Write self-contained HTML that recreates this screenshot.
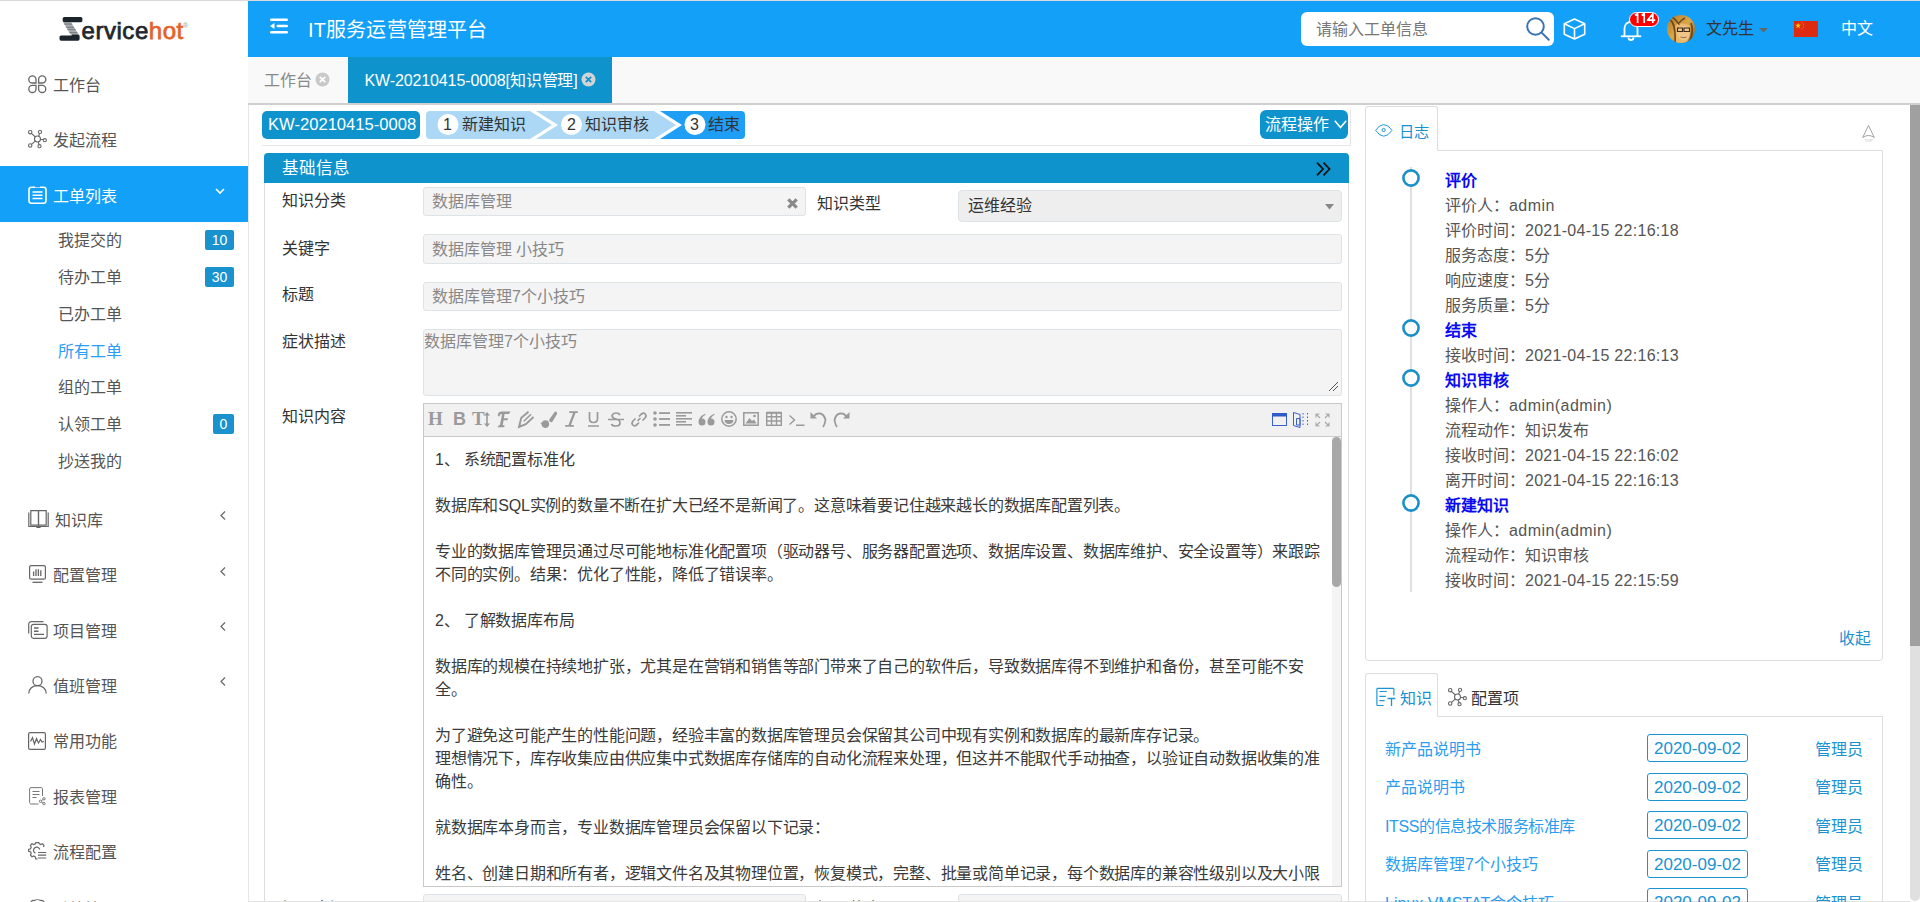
<!DOCTYPE html>
<html lang="zh-CN"><head><meta charset="utf-8">
<style>
*{margin:0;padding:0;box-sizing:border-box}
html,body{width:1920px;height:902px;overflow:hidden;background:#fff;font-family:"Liberation Sans",sans-serif;color:#555}
.a{position:absolute}
.t{position:absolute;white-space:nowrap;font-size:16px;line-height:20px}
svg{position:absolute;overflow:visible}
#topline{left:0;top:0;width:1920px;height:1px;background:#d9dadc}
#side{left:0;top:1px;width:249px;height:901px;background:#fff;border-right:1px solid #e6e6e6}
.mt{position:absolute;left:53px;font-size:16px;line-height:20px;color:#555;white-space:nowrap}
.sub{position:absolute;left:58px;font-size:16px;line-height:20px;color:#555;white-space:nowrap}
.badge{position:absolute;left:205px;width:29px;height:20px;background:#1a92cd;border-radius:2px;color:#fff;font-size:14px;line-height:20px;text-align:center}
#hdr{left:248px;top:1px;width:1672px;height:56px;background:#12a0f8}
#tabs{left:248px;top:57px;width:1672px;height:48px;background:#f9f9f9;border-bottom:2px solid #cfcfcf}
</style></head><body>
<div id="topline" class="a"></div>

<!-- SIDEBAR -->
<div id="side" class="a">
  <!-- logo -->
  <svg style="left:59px;top:15px" width="30" height="26" viewBox="0 0 30 26">
    <path d="M4.2 6.2H12L19.8 18.8H11.8z" fill="#a9adb2"/>
    <path d="M5.2 8.1H13.2 M6.9 11.3H15.1 M8.4 13.6H16.6 M10.3 16.6H18.4" stroke="#6f757b" stroke-width="0.9"/>
    <path d="M5.3 0.9H21.8Q23.4 0.9 23.4 2.5V4.6Q23.4 6.2 21.8 6.2H5.3Q3.7 6.2 3.7 4.6V2.5Q3.7 0.9 5.3 0.9z" fill="#1b232b"/>
    <path d="M2.1 19.5H12.5L13 18.6H19Q20.6 18.6 20.6 20.2V23.1Q20.6 24.7 19 24.7H2.1Q0.5 24.7 0.5 23.1V21.1Q0.5 19.5 2.1 19.5z" fill="#1b232b"/>
  </svg>
  <div class="t" style="left:81.5px;top:15px;font-size:24px;line-height:30px;color:#1e262e;letter-spacing:0.55px;-webkit-text-stroke:0.75px #1e262e">ervice<span style="color:#e4632a;-webkit-text-stroke:0.75px #e4632a">hot</span></div>
  <div class="t" style="left:183px;top:21px;font-size:7px;line-height:8px;color:#999">®</div>
</div>
<div id="menu" class="a" style="left:0;top:0;width:248px;height:902px">
  <!-- 工作台 -->
  <svg style="left:28px;top:75px" width="19" height="18" viewBox="0 0 19 18" fill="none" stroke="#666" stroke-width="1.3">
    <path d="M8 8H4.4A3.6 3.6 0 1 1 8 4.4z"/>
    <path d="M10.6 8V4.4A3.6 3.6 0 1 1 14.2 8z"/>
    <path d="M8 10.3V13.9A3.6 3.6 0 1 1 4.4 10.3z"/>
    <path d="M10.6 10.3H14.2A3.6 3.6 0 1 1 10.6 13.9z"/>
  </svg>
  <div class="mt" style="top:76px">工作台</div>
  <!-- 发起流程 -->
  <svg style="left:28px;top:130px" width="19" height="18" viewBox="0 0 19 18" fill="none" stroke="#666" stroke-width="1.1">
    <circle cx="9.5" cy="9" r="3"/>
    <circle cx="2.2" cy="2.2" r="1.7"/><circle cx="12" cy="1.9" r="1.6"/><circle cx="16.8" cy="10.2" r="1.6"/><circle cx="2.2" cy="15.5" r="1.7"/><circle cx="11.5" cy="16.2" r="1.6"/>
    <path d="M3.4 3.4L7.4 7 M11.6 3.4L10.6 6.2 M12.5 9.5h2.7 M3.5 14.3l4-3.4 M10.2 12l0.9 2.6"/>
  </svg>
  <div class="mt" style="top:131px">发起流程</div>
  <!-- 工单列表 active -->
  <div class="a" style="left:0;top:166px;width:248px;height:56px;background:#12a0f8"></div>
  <svg style="left:28px;top:186px" width="19" height="18" viewBox="0 0 19 18" fill="none" stroke="#fff" stroke-width="1.6">
    <rect x="1" y="1.2" width="17" height="16" rx="2.5"/>
    <path d="M4.5 6h10 M4.5 9.2h10 M4.5 12.4h10" stroke-width="1.5"/>
    <path d="M7 0.6h5" stroke="#12a0f8" stroke-width="1.6"/>
  </svg>
  <div class="mt" style="top:187px;color:#fff">工单列表</div>
  <svg style="left:215px;top:188px" width="10" height="7" viewBox="0 0 10 7" fill="none" stroke="#fff" stroke-width="1.6"><path d="M1 1l4 4 4-4"/></svg>
  <!-- submenu -->
  <div class="sub" style="top:231px">我提交的</div><div class="badge" style="top:230px">10</div>
  <div class="sub" style="top:268px">待办工单</div><div class="badge" style="top:267px">30</div>
  <div class="sub" style="top:305px">已办工单</div>
  <div class="sub" style="top:342px;color:#2a9df4">所有工单</div>
  <div class="sub" style="top:378px">组的工单</div>
  <div class="sub" style="top:415px">认领工单</div><div class="badge" style="top:414px;left:213px;width:21px">0</div>
  <div class="sub" style="top:452px">抄送我的</div>
  <!-- 知识库 -->
  <svg style="left:28px;top:510px" width="21" height="18" viewBox="0 0 21 18" fill="none" stroke="#666" stroke-width="1.2">
    <path d="M0.8 2.5V16.5H20.2V2.5"/>
    <path d="M2.8 0.7H9.8C10.2 0.7 10.5 1 10.5 1.4V15.2H2.8z"/>
    <path d="M18.2 0.7H11.2C10.8 0.7 10.5 1 10.5 1.4V15.2H18.2z"/>
    <path d="M9 16.6v0.8h3v-0.8"/>
  </svg>
  <div class="mt" style="top:511px;left:55px">知识库</div>
  <svg style="left:220px;top:511px" width="6" height="9" viewBox="0 0 6 9" fill="none" stroke="#666" stroke-width="1.2"><path d="M5 0.5L1 4.5 5 8.5"/></svg>
  <!-- 配置管理 -->
  <svg style="left:29px;top:565px" width="17" height="18" viewBox="0 0 17 18" fill="none" stroke="#666" stroke-width="1.2">
    <rect x="0.6" y="0.6" width="15.8" height="13.6" rx="1.5"/>
    <path d="M3.5 17.3h10" stroke-width="1.3"/>
    <path d="M4.6 11V6.5 M7 11V4.2 M9.4 11V4.2 M11.8 11V5.2" stroke-width="1.3"/>
  </svg>
  <div class="mt" style="top:566px">配置管理</div>
  <svg style="left:220px;top:567px" width="6" height="9" viewBox="0 0 6 9" fill="none" stroke="#666" stroke-width="1.2"><path d="M5 0.5L1 4.5 5 8.5"/></svg>
  <!-- 项目管理 -->
  <svg style="left:28px;top:621px" width="20" height="18" viewBox="0 0 20 18" fill="none" stroke="#666" stroke-width="1.2">
    <path d="M0.7 12.5V3.4C0.7 1.8 1.8 0.7 3.4 0.7H15.5"/>
    <rect x="3.3" y="3.3" width="15.8" height="14" rx="2.2"/>
    <path d="M6 7h4.5 M6 10.2h4.5 M6 13.4h10" stroke-width="1.4"/>
  </svg>
  <div class="mt" style="top:622px">项目管理</div>
  <svg style="left:220px;top:622px" width="6" height="9" viewBox="0 0 6 9" fill="none" stroke="#666" stroke-width="1.2"><path d="M5 0.5L1 4.5 5 8.5"/></svg>
  <!-- 值班管理 -->
  <svg style="left:28px;top:676px" width="19" height="18" viewBox="0 0 19 18" fill="none" stroke="#666" stroke-width="1.3">
    <circle cx="9.5" cy="5.2" r="4.5"/>
    <path d="M0.8 17.6C0.8 12.6 4.6 9.7 9.5 9.7S18.2 12.6 18.2 17.6"/>
  </svg>
  <div class="mt" style="top:677px">值班管理</div>
  <svg style="left:220px;top:677px" width="6" height="9" viewBox="0 0 6 9" fill="none" stroke="#666" stroke-width="1.2"><path d="M5 0.5L1 4.5 5 8.5"/></svg>
  <!-- 常用功能 -->
  <svg style="left:28px;top:732px" width="18" height="18" viewBox="0 0 18 18" fill="none" stroke="#666" stroke-width="1.2">
    <rect x="0.6" y="0.6" width="16.8" height="16.8" rx="1.5"/>
    <path d="M2.5 9.5L4.5 5.5 6.5 12 8.5 6.5 10.5 11 12.5 7.5 14 10 16 9.5"/>
  </svg>
  <div class="mt" style="top:732px">常用功能</div>
  <!-- 报表管理 -->
  <svg style="left:29px;top:787px" width="17" height="18" viewBox="0 0 17 18" fill="none" stroke="#777" stroke-width="1">
    <path d="M13.5 9V2C13.5 1.2 12.8 0.6 12 0.6H2C1.2 0.6 0.6 1.2 0.6 2V15.5C0.6 16.3 1.2 17 2 17H9.5"/>
    <path d="M3.5 4.5h7 M3.5 7.5h7 M3.5 10.5h4"/>
    <circle cx="15" cy="11.8" r="1.2"/><circle cx="11.5" cy="14.3" r="1.2"/><circle cx="15" cy="16.6" r="1.2"/>
    <path d="M12.5 13.6l1.5-1.1 M12.5 15l1.5 1"/>
  </svg>
  <div class="mt" style="top:788px">报表管理</div>
  <!-- 流程配置 -->
  <svg style="left:28px;top:842px" width="19" height="18" viewBox="0 0 19 18" fill="none" stroke="#666" stroke-width="1.2">
    <path d="M9.5 16.8H7.8L7.3 14.8 5.8 14 4 14.7 2.5 13.1 3.2 11.3 2.5 9.8 0.6 9.2V7.4L2.5 6.8 3.2 5.2 2.4 3.4 4 1.8 5.8 2.5 7.3 1.8 7.8 0.6H10.8L11.3 1.8 12.8 2.5 14.5 1.8 16 3.4 15.4 5"/>
    <path d="M11.8 7.5A3.2 3.2 0 1 0 7.5 11.3"/>
    <path d="M10 10.5h8.2 M10 13.2h8.2 M10 16h8.2"/>
  </svg>
  <div class="mt" style="top:843px">流程配置</div>
  <svg style="left:28px;top:899px" width="19" height="18" viewBox="0 0 19 18" fill="none" stroke="#666" stroke-width="1.2">
    <path d="M2 6C2 3 4 1 6.5 1.5 8 0.5 11 0.5 12.5 1.5 15 1 17 3 17 6"/>
  </svg>
  <div class="mt" style="top:900px">系统管理</div>
</div>
<!-- HEADER -->
<div id="hdr" class="a"></div>
<svg style="left:270px;top:18px" width="18" height="16" viewBox="0 0 18 16">
  <rect x="0" y="0.5" width="18" height="2.6" rx="1.3" fill="#fff"/>
  <path d="M0 8L4.5 5v6z" fill="#fff"/>
  <rect x="6.5" y="6.7" width="11.5" height="2.6" rx="1.3" fill="#fff"/>
  <rect x="0" y="12.9" width="18" height="2.6" rx="1.3" fill="#fff"/>
</svg>
<div class="t" style="left:308px;top:18px;font-size:20px;line-height:24px;color:#fff;letter-spacing:0.15px">IT服务运营管理平台</div>
<!-- search -->
<div class="a" style="left:1301px;top:12px;width:253px;height:34px;background:#fff;border-radius:6px"></div>
<div class="t" style="left:1315.5px;top:19.5px;color:#777">请输入工单信息</div>
<svg style="left:1526px;top:17px" width="24" height="24" viewBox="0 0 24 24" fill="none" stroke="#3b74b0" stroke-width="2">
  <circle cx="9.5" cy="9.5" r="8.3"/><path d="M15.6 15.6L22.8 22.8" stroke-linecap="round"/>
</svg>
<!-- cube -->
<svg style="left:1563px;top:18px" width="23" height="22" viewBox="0 0 23 22" fill="none" stroke="#fff" stroke-width="1.6" stroke-linejoin="round">
  <path d="M11.5 1L21.7 5.8V16.2L11.5 21 1.3 16.2V5.8z"/><path d="M1.3 5.8L11.5 10.6 21.7 5.8 M11.5 10.6V21"/>
</svg>
<!-- bell -->
<svg style="left:1620px;top:19px" width="22" height="22" viewBox="0 0 22 22" fill="none" stroke="#fff" stroke-width="1.8">
  <path d="M4.5 17V9.5C4.5 5.5 7.2 2.8 11 2.8S17.5 5.5 17.5 9.5V17"/><path d="M0.8 17.3H21.2"/><path d="M8.5 18.5A2.5 2.5 0 0 0 13.5 18.5"/>
</svg>
<div class="a" style="left:1629px;top:12px;width:30px;height:15px;background:#ff0000;border:1.4px solid #fff;border-radius:7.5px"></div><svg style="left:1633.5px;top:13px" width="22" height="10" viewBox="0 0 22 10" fill="none" stroke="#fff" stroke-width="1.7"><path d="M1 2.4L3.6 0.4V9.9 M7.6 2.4L10.2 0.4V9.9 M18.8 9.9V0.8L13.6 7.2H21.2" stroke-linejoin="round"/></svg>
<!-- avatar -->
<svg style="left:1667px;top:15px" width="28" height="28" viewBox="0 0 28 28">
  <defs><clipPath id="av"><circle cx="14" cy="14" r="14"/></clipPath>
  <linearGradient id="ag" x1="0" y1="0" x2="1" y2="1"><stop offset="0" stop-color="#b27a2a"/><stop offset="0.5" stop-color="#d9a748"/><stop offset="1" stop-color="#8a5418"/></linearGradient></defs>
  <g clip-path="url(#av)">
    <rect width="28" height="28" fill="url(#ag)"/>
    <path d="M9 10C12 8 19 8 23 11 24 16 23 24 19 28H9C8 22 7 15 9 10z" fill="#e9b86a"/>
    <ellipse cx="16.5" cy="18" rx="6" ry="7.5" fill="#f0c58a"/>
    <path d="M2 4C6 6 9 14 8 28 M5 2C10 5 12 10 12 9 M18 3C14 5 12 8 11 9 M24 8C26 14 25 22 22 28" stroke="#5a3510" stroke-width="1.6" fill="none" opacity="0.8"/>
    <path d="M10.5 13h5v3.5h-5z M17 13h5.5v3.5H17z" fill="none" stroke="#3a2a1a" stroke-width="1.1"/>
    <path d="M13.5 22q3 1.5 6 0" stroke="#9a5a3a" stroke-width="0.9" fill="none"/>
  </g>
</svg>
<div class="t" style="left:1706px;top:19px;color:#333">文先生</div>
<svg style="left:1759px;top:28px" width="9" height="5" viewBox="0 0 9 5"><path d="M0 0h9L4.5 4.5z" fill="#666"/></svg>
<!-- flag -->
<svg style="left:1794px;top:21px" width="24" height="16" viewBox="0 0 24 16">
  <rect width="24" height="16" fill="#de2a10"/>
  <path d="M4.1 1.7l0.75 2.1h2.2l-1.8 1.3 0.7 2.1-1.85-1.3-1.85 1.3 0.7-2.1-1.8-1.3h2.2z" fill="#ffd400"/>
  <circle cx="8" cy="1.5" r="0.7" fill="#f07010"/><circle cx="9.5" cy="3.3" r="0.7" fill="#f07010"/><circle cx="9.5" cy="5.8" r="0.7" fill="#f07010"/><circle cx="8" cy="7.8" r="0.7" fill="#f07010"/>
</svg>
<div class="t" style="left:1841px;top:19px;color:#fff">中文</div>

<!-- TABS -->
<div id="tabs" class="a"></div>
<div class="t" style="left:264px;top:70.5px;color:#888">工作台</div>
<svg style="left:315px;top:72px" width="15" height="15" viewBox="0 0 15 15"><circle cx="7.5" cy="7.5" r="7" fill="#c9c9c9"/><path d="M4.8 4.8l5.4 5.4 M10.2 4.8l-5.4 5.4" stroke="#fff" stroke-width="1.8"/></svg>
<div class="a" style="left:348px;top:57px;width:264px;height:46px;background:#0f93cc"></div>
<div class="t" style="left:364.5px;top:70.5px;color:#fff;letter-spacing:-0.12px">KW-20210415-0008[知识管理]</div>
<svg style="left:581px;top:72px" width="15" height="15" viewBox="0 0 15 15"><circle cx="7.5" cy="7.5" r="7" fill="#d3d3d3"/><path d="M4.8 4.8l5.4 5.4 M10.2 4.8l-5.4 5.4" stroke="#0f93cc" stroke-width="1.8"/></svg>

<!-- STEP ROW -->
<div class="a" style="left:262px;top:110px;width:1089px;height:36px;border-right:1px solid #e6e6e6;border-bottom:1px solid #e6e6e6"></div>
<div class="a" style="left:262px;top:111px;width:158px;height:28px;background:#0f93cc;border-radius:5px"></div>
<div class="t" style="left:268px;top:115px;color:#fff;font-size:16.6px">KW-20210415-0008</div>
<svg style="left:426px;top:111px" width="320" height="28" viewBox="0 0 320 28">
  <path d="M4 0H104L126 14 104 28H4Q0 28 0 24V4Q0 0 4 0z" fill="#acd8f5"/>
  <path d="M110 0H228L250 14 228 28H110L132 14z" fill="#acd8f5"/>
  <path d="M234 0H315Q319 0 319 4V24Q319 28 315 28H234L256 14z" fill="#1f9ef6"/>
  <circle cx="22" cy="13.5" r="10.5" fill="#fff"/>
  <circle cx="145.5" cy="13.5" r="10.5" fill="#fff"/>
  <circle cx="269" cy="13.5" r="10.5" fill="#fff"/>
</svg>
<div class="t" style="left:443px;top:115px;color:#333">1</div>
<div class="t" style="left:462px;top:115px;color:#333">新建知识</div>
<div class="t" style="left:567px;top:115px;color:#333">2</div>
<div class="t" style="left:585px;top:115px;color:#333">知识审核</div>
<div class="t" style="left:690px;top:115px;color:#333">3</div>
<div class="t" style="left:708px;top:115px;color:#333">结束</div>
<!-- 流程操作 -->
<div class="a" style="left:1260px;top:110px;width:88px;height:29px;background:#0f93cc;border-radius:6px"></div>
<div class="t" style="left:1265px;top:115px;color:#fff">流程操作</div>
<svg style="left:1334px;top:120px" width="13" height="9" viewBox="0 0 13 9" fill="none" stroke="#fff" stroke-width="1.6"><path d="M0.8 0.8L6.5 7.5 12.2 0.8"/></svg>

<!-- CARD -->
<div class="a" style="left:264px;top:153px;width:1085px;height:760px;border:1px solid #dcdcdc;border-radius:4px 4px 0 0"></div>
<div class="a" style="left:264px;top:153px;width:1085px;height:30px;background:#0f93cc;border-radius:4px 4px 0 0"></div>
<div class="t" style="left:282px;top:158px;color:#fff;font-size:16.5px">基础信息</div>
<svg style="left:1316px;top:162px" width="15" height="14" viewBox="0 0 15 14" fill="none" stroke="#111" stroke-width="1.8"><path d="M1 0.7L7 7 1 13.3 M7.5 0.7L13.5 7 7.5 13.3"/></svg>

<!-- form rows -->
<div class="t" style="left:282px;top:191px;color:#333">知识分类</div>
<div class="a" style="left:423px;top:187px;width:383px;height:29px;background:#f4f4f4;border:1px solid #dde3e7;border-radius:3px"></div>
<div class="t" style="left:432px;top:192px;color:#888">数据库管理</div>
<svg style="left:787px;top:198px" width="11" height="11" viewBox="0 0 11 11" stroke="#8a8a8a" stroke-width="3.2"><path d="M1.3 1.3l8.4 8.4 M9.7 1.3l-8.4 8.4"/></svg>
<div class="t" style="left:817px;top:194px;color:#333">知识类型</div>
<div class="a" style="left:958px;top:190px;width:384px;height:32px;background:#eeeeee;border:1px solid #dde3e7;border-radius:4px"></div>
<div class="t" style="left:968px;top:196px;color:#333">运维经验</div>
<svg style="left:1325px;top:204px" width="9" height="6" viewBox="0 0 9 6"><path d="M0 0h9L4.5 5.5z" fill="#888"/></svg>

<div class="t" style="left:282px;top:239px;color:#333">关键字</div>
<div class="a" style="left:423px;top:234px;width:919px;height:30px;background:#f4f4f4;border:1px solid #dde3e7;border-radius:3px"></div>
<div class="t" style="left:432px;top:240px;color:#888">数据库管理 小技巧</div>

<div class="t" style="left:282px;top:285px;color:#333">标题</div>
<div class="a" style="left:423px;top:282px;width:919px;height:29px;background:#f4f4f4;border:1px solid #dde3e7;border-radius:3px"></div>
<div class="t" style="left:432px;top:287px;color:#888">数据库管理7个小技巧</div>

<div class="t" style="left:282px;top:332px;color:#333">症状描述</div>
<div class="a" style="left:423px;top:329px;width:919px;height:67px;background:#f4f4f4;border:1px solid #dde3e7;border-radius:3px"></div>
<div class="t" style="left:424px;top:332px;color:#888">数据库管理7个小技巧</div>
<svg style="left:1328px;top:381px" width="11" height="11" viewBox="0 0 11 11" stroke="#555" stroke-width="1"><path d="M1 10L10 1 M5 10L10 5"/></svg>

<div class="t" style="left:282px;top:407px;color:#333">知识内容</div>

<!-- EDITOR -->
<div class="a" style="left:423px;top:403px;width:919px;height:484px;border:1px solid #c9c9c9;background:#fff"></div>
<div class="a" style="left:424px;top:404px;width:917px;height:33px;background:#f1f1f1;border-bottom:1px solid #c9c9c9"></div>
<div class="a" style="left:1332px;top:437px;width:9px;height:449px;background:#f4f4f4"></div>
<div class="a" style="left:1332px;top:437px;width:9px;height:150px;background:#a8a8a8;border-radius:4.5px"></div>
<div id="tb" class="a" style="left:0;top:0">
  <div class="t" style="left:428px;top:409px;font-family:'Liberation Serif',serif;font-weight:bold;font-size:19px;line-height:20px;color:#9a9a9a">H</div>
  <div class="t" style="left:453px;top:409px;font-family:'Liberation Sans',sans-serif;font-weight:bold;font-size:18px;line-height:20px;color:#9a9a9a">B</div>
  <div class="t" style="left:472px;top:409px;font-family:'Liberation Serif',serif;font-weight:bold;font-size:19px;line-height:20px;color:#9a9a9a">T</div>
  <svg style="left:484px;top:412px" width="6" height="15" viewBox="0 0 6 15" fill="#9a9a9a"><path d="M3 0L6 3.5H3.8V11.5H6L3 15 0 11.5H2.2V3.5H0z"/></svg>
  <svg style="left:497px;top:411px" width="14" height="17" viewBox="0 0 14 17" fill="#9a9a9a"><path d="M1.2 5.2C0.2 3.5 1.5 0.6 5 0.6H13.5L12 3H7.6L5.8 14.3H7.6L7.2 16.3H0.4L1.6 14.5C2.6 14.3 3 14 3.2 13L5 3C3.5 3 2.5 3.8 2.5 5.5z"/><path d="M6.3 7.2H11L10.6 9.2H5.9z"/></svg>
  <svg style="left:518px;top:411px" width="18" height="17" viewBox="0 0 18 17" fill="none" stroke="#9a9a9a" stroke-width="1.9" stroke-linecap="butt"><path d="M10.5 0.8L3.3 6.8 1 16 7.8 13.2 15.5 6"/><path d="M5.8 10.3L13 3.2" stroke-width="1.6"/><path d="M1 16L1.6 12.8 4.2 15z" fill="#9a9a9a" stroke="none"/></svg>
  <svg style="left:540px;top:411px" width="18" height="17" viewBox="0 0 18 17" fill="#9a9a9a"><path d="M15 0.4C16.8 0.4 17.6 2 16.9 3.3L12.5 10.6C11.8 11.4 10.6 11.4 9.8 10.6 9 9.9 9 8.8 9.6 8z"/><path d="M5.2 9.3A3.8 3.8 0 1 1 1.6 13.6C1.2 12.8 0.6 12 0.2 11.8 1.2 12.2 2 11.3 2.6 10.5 3.3 9.7 4.2 9.3 5.2 9.3z"/></svg>
  <svg style="left:565px;top:411px" width="13" height="16" viewBox="0 0 13 16" fill="none" stroke="#9a9a9a"><path d="M4.2 1.1H12.8 M0.2 14.9H8.8" stroke-width="1.8"/><path d="M9.6 1.1L4.4 14.9" stroke-width="2.3"/></svg>
  <svg style="left:588px;top:412px" width="11" height="15" viewBox="0 0 11 15" fill="none" stroke="#9a9a9a" stroke-width="1.7"><path d="M1.5 0V6.5Q1.5 10.5 5.5 10.5T9.5 6.5V0 M0 14h11"/></svg>
  <svg style="left:608px;top:412px" width="16" height="15" viewBox="0 0 16 15" fill="none" stroke="#9a9a9a" stroke-width="1.7"><path d="M12 3Q11 1 8 1T4 3.5Q4 6 8 7T12 11Q12 14 8 14T3.5 12 M0 7.5h16"/></svg>
  <svg style="left:631px;top:412px" width="16" height="15" viewBox="0 0 16 15" fill="none" stroke="#9a9a9a" stroke-width="1.7"><path d="M6.5 9L9.5 6 M8 4.5L10.5 2Q12.5 0.3 14.2 2T14 6L11.5 8.5 M8 10.5L5.5 13Q3.5 14.7 1.8 13T2 9L4.5 6.5"/></svg>
  <svg style="left:653px;top:411px" width="17" height="16" viewBox="0 0 17 16" fill="#9a9a9a"><circle cx="2" cy="2" r="1.8"/><circle cx="2" cy="8" r="1.8"/><circle cx="2" cy="14" r="1.8"/><rect x="6" y="1.2" width="11" height="1.8"/><rect x="6" y="7.1" width="11" height="1.8"/><rect x="6" y="13" width="11" height="1.8"/></svg>
  <svg style="left:676px;top:412px" width="16" height="14" viewBox="0 0 16 14" fill="#9a9a9a"><rect y="0" width="16" height="1.6"/><rect y="3" width="10" height="1.6"/><rect y="6" width="16" height="1.6"/><rect y="9" width="10" height="1.6"/><rect y="12" width="16" height="1.6"/></svg>
  <svg style="left:698px;top:413px" width="17" height="13" viewBox="0 0 17 13" fill="#9a9a9a"><path d="M7.5 0.8C4 2 0.5 5 0.5 9A3.5 3.5 0 1 0 4 5.5C4.5 4 6 2.5 7.5 1.8z"/><path d="M16.5 0.8C13 2 9.5 5 9.5 9A3.5 3.5 0 1 0 13 5.5C13.5 4 15 2.5 16.5 1.8z"/></svg>
  <svg style="left:721px;top:411px" width="16" height="16" viewBox="0 0 16 16"><circle cx="8" cy="8" r="7.2" fill="none" stroke="#9a9a9a" stroke-width="1.5"/><circle cx="5.5" cy="6" r="1.2" fill="#9a9a9a"/><circle cx="10.5" cy="6" r="1.2" fill="#9a9a9a"/><path d="M3.5 9H12.5Q12 13 8 13T3.5 9z" fill="#9a9a9a"/></svg>
  <svg style="left:743px;top:412px" width="16" height="14" viewBox="0 0 16 14"><rect x="0.8" y="0.8" width="14.4" height="12.4" fill="none" stroke="#9a9a9a" stroke-width="1.5"/><path d="M2.5 11.5L6.5 6 9 9 11 7.5 13.5 11.5z" fill="#9a9a9a"/><circle cx="11.5" cy="4" r="1.3" fill="#9a9a9a"/></svg>
  <svg style="left:766px;top:412px" width="16" height="14" viewBox="0 0 16 14" fill="none" stroke="#9a9a9a" stroke-width="1.4"><rect x="0.7" y="0.7" width="14.6" height="12.6"/><path d="M0.7 0.7h14.6" stroke-width="2"/><path d="M0.7 4.8h14.6 M0.7 9h14.6 M5.5 0.7v12.6 M10.5 0.7v12.6"/></svg>
  <svg style="left:789px;top:415px" width="16" height="11" viewBox="0 0 16 11" fill="none" stroke="#9a9a9a" stroke-width="1.4"><path d="M0.5 0.5L5.5 5 0.5 9.5 M7 10.3h8.5"/></svg>
  <svg style="left:810px;top:411px" width="17" height="17" viewBox="0 0 17 17"><path d="M3.5 5.5Q6 2 10 2.5T15.5 9Q15 13 13 16" fill="none" stroke="#9a9a9a" stroke-width="1.8"/><path d="M0.5 1V7.5H7z" fill="#9a9a9a"/></svg>
  <svg style="left:833px;top:411px" width="17" height="17" viewBox="0 0 17 17"><path d="M13.5 5.5Q11 2 7 2.5T1.5 9Q2 13 4 16" fill="none" stroke="#9a9a9a" stroke-width="1.8"/><path d="M16.5 1V7.5H10z" fill="#9a9a9a"/></svg>
  <svg style="left:1272px;top:413px" width="15" height="13" viewBox="0 0 15 13"><rect x="0.5" y="0.5" width="14" height="12" fill="none" stroke="#3a5fd0" stroke-width="1"/><rect x="0" y="0" width="15" height="3.5" fill="#2d5cc8"/></svg>
  <svg style="left:1293px;top:412px" width="16" height="16" viewBox="0 0 16 16" fill="none" stroke="#3a5fd0" stroke-width="1"><path d="M0.5 0.5L7 2.5V15.5L0.5 13.5z M3.5 6.5h3.5v6.5H3.5z"/><path d="M10 1v14 M14.5 1v14" stroke-dasharray="1.5 2"/></svg>
  <svg style="left:1315px;top:413px" width="15" height="14" viewBox="0 0 15 14" fill="none" stroke="#aaa" stroke-width="1.2"><path d="M1 1l4 4 M1 1h3.5 M1 1v3.5 M14 1l-4 4 M14 1h-3.5 M14 1v3.5 M1 13l4-4 M1 13h3.5 M1 13v-3.5 M14 13l-4-4 M14 13h-3.5 M14 13v-3.5"/></svg>
</div>
<div class="a" style="left:435px;top:448px;width:900px;font-size:16px;line-height:23px;color:#3a3a3a;white-space:nowrap;letter-spacing:-0.2px">
1、 系统配置标准化<br><br>
数据库和SQL实例的数量不断在扩大已经不是新闻了。这意味着要记住越来越长的数据库配置列表。<br><br>
专业的数据库管理员通过尽可能地标准化配置项（驱动器号、服务器配置选项、数据库设置、数据库维护、安全设置等）来跟踪<br>
不同的实例。结果：优化了性能，降低了错误率。<br><br>
2、 了解数据库布局<br><br>
数据库的规模在持续地扩张，尤其是在营销和销售等部门带来了自己的软件后，导致数据库得不到维护和备份，甚至可能不安<br>
全。<br><br>
为了避免这可能产生的性能问题，经验丰富的数据库管理员会保留其公司中现有实例和数据库的最新库存记录。<br>
理想情况下，库存收集应由供应集中式数据库存储库的自动化流程来处理，但这并不能取代手动抽查，以验证自动数据收集的准<br>
确性。<br><br>
就数据库本身而言，专业数据库管理员会保留以下记录：<br><br>
姓名、创建日期和所有者，逻辑文件名及其物理位置，恢复模式，完整、批量或简单记录，每个数据库的兼容性级别以及大小限
</div>
<!-- next row (cut) -->
<div class="a" style="left:423px;top:894px;width:383px;height:29px;background:#f4f4f4;border:1px solid #dde3e7;border-radius:3px"></div>
<div class="a" style="left:958px;top:894px;width:384px;height:29px;background:#f4f4f4;border:1px solid #dde3e7;border-radius:3px"></div>
<div class="t" style="left:282px;top:899px;color:#333">知识来源</div>
<div class="t" style="left:817px;top:899px;color:#333">知识状态</div>
<div class="a" style="left:248px;top:901px;width:1662px;height:1px;background:#e4e4e4"></div>

<!-- RIGHT PANEL: LOG -->
<div class="a" style="left:1365px;top:150px;width:518px;height:511px;border:1px solid #ddd;border-radius:0 0 4px 4px"></div>
<div class="a" style="left:1365px;top:106px;width:73px;height:45px;border:1px solid #ddd;border-bottom:1px solid #fff;border-radius:3px 3px 0 0;background:#fff"></div>
<svg style="left:1375px;top:124px" width="18" height="13" viewBox="0 0 18 13" fill="none" stroke="#1a90d0" stroke-width="0.95"><path d="M0.6 6.3Q4.5 0.6 8.8 0.6T17 6.3Q13 12.2 8.8 12.2T0.6 6.3z"/><circle cx="8.6" cy="6" r="1.6"/></svg>
<div class="t" style="left:1398.5px;top:122px;color:#1a90d0;font-size:15.3px">日志</div>
<svg style="left:1862px;top:125px" width="13" height="18" viewBox="0 0 13 18" fill="none" stroke="#8a8a8a" stroke-width="0.8"><path d="M6.5 0.5L12.3 12.5Q6.5 8.5 0.7 12.5z"/><text x="6.5" y="17" font-size="4" text-anchor="middle" fill="#bbb" stroke="none" font-family="Liberation Sans">TOP</text></svg>
<div class="a" style="left:1410px;top:167px;width:2px;height:425px;background:#e0e0e5"></div>
<svg style="left:1402px;top:169px" width="18" height="18" viewBox="0 0 18 18"><circle cx="9" cy="9" r="7.6" fill="#fff" stroke="#1a8fc9" stroke-width="2.6"/></svg>
<svg style="left:1402px;top:319px" width="18" height="18" viewBox="0 0 18 18"><circle cx="9" cy="9" r="7.6" fill="#fff" stroke="#1a8fc9" stroke-width="2.6"/></svg>
<svg style="left:1402px;top:369px" width="18" height="18" viewBox="0 0 18 18"><circle cx="9" cy="9" r="7.6" fill="#fff" stroke="#1a8fc9" stroke-width="2.6"/></svg>
<svg style="left:1402px;top:494px" width="18" height="18" viewBox="0 0 18 18"><circle cx="9" cy="9" r="7.6" fill="#fff" stroke="#1a8fc9" stroke-width="2.6"/></svg>
<div class="a" style="left:1445px;top:168px;font-size:16px;line-height:25px;color:#555;white-space:nowrap">
<b style="color:#0a0af0">评价</b><br>
评价人：<span style="letter-spacing:0.45px">admin</span><br>
评价时间：<span style="letter-spacing:0.28px">2021-04-15 22:16:18</span><br>
服务态度：5分<br>
响应速度：5分<br>
服务质量：5分<br>
<b style="color:#0a0af0">结束</b><br>
接收时间：<span style="letter-spacing:0.28px">2021-04-15 22:16:13</span><br>
<b style="color:#0a0af0">知识审核</b><br>
操作人：<span style="letter-spacing:0.45px">admin(admin)</span><br>
流程动作：知识发布<br>
接收时间：<span style="letter-spacing:0.28px">2021-04-15 22:16:02</span><br>
离开时间：<span style="letter-spacing:0.28px">2021-04-15 22:16:13</span><br>
<b style="color:#0a0af0">新建知识</b><br>
操作人：<span style="letter-spacing:0.45px">admin(admin)</span><br>
流程动作：知识审核<br>
接收时间：<span style="letter-spacing:0.28px">2021-04-15 22:15:59</span>
</div>
<div class="t" style="left:1839px;top:629px;color:#1a90d0;font-size:15.8px">收起</div>

<!-- RIGHT PANEL: KNOWLEDGE -->
<div class="a" style="left:1365px;top:716px;width:518px;height:200px;border:1px solid #ddd"></div>
<div class="a" style="left:1365px;top:673px;width:73px;height:44px;border:1px solid #ddd;border-bottom:1px solid #fff;border-radius:3px 3px 0 0;background:#fff"></div>
<svg style="left:1376px;top:687px" width="20" height="20" viewBox="0 0 20 20" fill="none" stroke="#1996d3" stroke-width="1.15"><path d="M7.7 18.5H1.6Q0.9 18.5 0.9 17.8V2.2Q0.9 1.4 1.7 1.4H17Q17.9 1.4 17.9 2.3V8.5"/><path d="M3.4 4.5H10.8 M3.4 9.4H9.7 M3.4 13.6H8.7"/><path d="M11.5 11.5H19.3 M15.5 11.5V19" stroke-width="1.3"/></svg>
<div class="t" style="left:1400px;top:689px;color:#1a90d0">知识</div>
<svg style="left:1448px;top:688px" width="19" height="18" viewBox="0 0 19 18" fill="none" stroke="#666" stroke-width="1.1">
  <circle cx="9.5" cy="9" r="3"/>
  <circle cx="2.2" cy="2.2" r="1.7"/><circle cx="12" cy="1.9" r="1.6"/><circle cx="16.8" cy="10.2" r="1.6"/><circle cx="2.2" cy="15.5" r="1.7"/><circle cx="11.5" cy="16.2" r="1.6"/>
  <path d="M3.4 3.4L7.4 7 M11.6 3.4L10.6 6.2 M12.5 9.5h2.7 M3.5 14.3l4-3.4 M10.2 12l0.9 2.6"/>
</svg>
<div class="t" style="left:1471px;top:689px;color:#333">配置项</div>

<div class="t" style="left:1385px;top:740px;color:#2a9df0">新产品说明书</div>
<div class="t" style="left:1385px;top:778px;color:#2a9df0">产品说明书</div>
<div class="t" style="left:1385px;top:817px;color:#2a9df0;letter-spacing:-0.4px">ITSS的信息技术服务标准库</div>
<div class="t" style="left:1385px;top:855px;color:#2a9df0">数据库管理7个小技巧</div>
<div class="t" style="left:1385px;top:894px;color:#2a9df0">Linux VMSTAT命令技巧</div>
<div class="a" style="left:1647px;top:734px;width:101px;height:28px;border:1px solid #1a93d3;border-radius:3px"></div>
<div class="a" style="left:1647px;top:773px;width:101px;height:28px;border:1px solid #1a93d3;border-radius:3px"></div>
<div class="a" style="left:1647px;top:811px;width:101px;height:28px;border:1px solid #1a93d3;border-radius:3px"></div>
<div class="a" style="left:1647px;top:850px;width:101px;height:28px;border:1px solid #1a93d3;border-radius:3px"></div>
<div class="a" style="left:1647px;top:888px;width:101px;height:28px;border:1px solid #1a93d3;border-radius:3px"></div>
<div class="t" style="left:1654px;top:738px;color:#1a93d3;font-size:17px;margin-top:1px">2020-09-02</div>
<div class="t" style="left:1654px;top:777px;color:#1a93d3;font-size:17px;margin-top:1px">2020-09-02</div>
<div class="t" style="left:1654px;top:815px;color:#1a93d3;font-size:17px;margin-top:1px">2020-09-02</div>
<div class="t" style="left:1654px;top:854px;color:#1a93d3;font-size:17px;margin-top:1px">2020-09-02</div>
<div class="t" style="left:1654px;top:892px;color:#1a93d3;font-size:17px;margin-top:1px">2020-09-02</div>
<div class="t" style="left:1815px;top:740px;color:#1a93d3">管理员</div>
<div class="t" style="left:1815px;top:778px;color:#1a93d3">管理员</div>
<div class="t" style="left:1815px;top:817px;color:#1a93d3">管理员</div>
<div class="t" style="left:1815px;top:855px;color:#1a93d3">管理员</div>
<div class="t" style="left:1815px;top:894px;color:#1a93d3">管理员</div>

<!-- page scrollbar -->
<div class="a" style="left:1910px;top:105px;width:10px;height:796px;background:#e0e0e0;border-radius:0 0 5px 5px"></div>
<div class="a" style="left:1910px;top:105px;width:10px;height:541px;background:#a0a0a0"></div>
</body></html>
